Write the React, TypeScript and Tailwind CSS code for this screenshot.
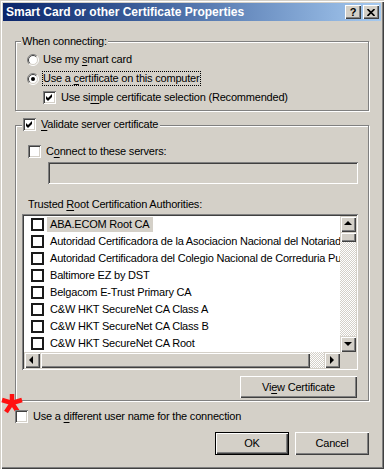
import type { ReactNode } from "react";

const raised =
  "bg-[#d4d0c8] shadow-[inset_1px_1px_0_#fff,inset_-1px_-1px_0_#404040,inset_-2px_-2px_0_#808080]";
const raisedSoft =
  "bg-[#d4d0c8] shadow-[inset_1px_1px_0_#d4d0c8,inset_2px_2px_0_#fff,inset_-1px_-1px_0_#404040,inset_-2px_-2px_0_#808080]";
const sunken =
  "shadow-[inset_1px_1px_0_#808080,inset_-1px_-1px_0_#fff,inset_2px_2px_0_#404040,inset_-2px_-2px_0_#d4d0c8]";
const etched = "border border-[#808080] shadow-[inset_1px_1px_0_#fff,1px_1px_0_#fff]";
const dither =
  "bg-[conic-gradient(#d4d0c8_25%,#fff_0_50%,#d4d0c8_0_75%,#fff_0)] bg-[length:2px_2px]";

const certs = [
  "ABA.ECOM Root CA",
  "Autoridad Certificadora de la Asociacion Nacional del Notariado Mexicano",
  "Autoridad Certificadora del Colegio Nacional de Correduria Publica Mexicana",
  "Baltimore EZ by DST",
  "Belgacom E-Trust Primary CA",
  "C&W HKT SecureNet CA Class A",
  "C&W HKT SecureNet CA Class B",
  "C&W HKT SecureNet CA Root",
];

const Check = ({ checked = false }: { checked?: boolean }) => (
  <span className={`relative block w-[13px] h-[13px] shrink-0 bg-white ${sunken}`}>
    {checked && (
      <svg width="13" height="13" viewBox="0 0 13 13" className="absolute left-0 top-0">
        <polygon points="3,5 5,7 9,3 9,6 5,10 3,8" fill="#000" />
      </svg>
    )}
  </span>
);

const Radio = ({ checked = false }: { checked?: boolean }) => (
  <svg width="12" height="12" viewBox="0 0 12 12" className="shrink-0">
    <circle cx="6" cy="6" r="5" fill="#fff" />
    <path d="M2.1 9.9 A5.5 5.5 0 0 1 9.9 2.1" stroke="#808080" fill="none" />
    <path d="M9.9 2.1 A5.5 5.5 0 0 1 2.1 9.9" stroke="#fff" fill="none" />
    <path d="M2.8 9.2 A4.5 4.5 0 0 1 9.2 2.8" stroke="#404040" fill="none" />
    <path d="M9.2 2.8 A4.5 4.5 0 0 1 2.8 9.2" stroke="#d4d0c8" fill="none" />
    {checked && <circle cx="6" cy="6" r="2" fill="#000" />}
  </svg>
);

const Arrow = ({ dir }: { dir: "up" | "down" | "left" | "right" }) => {
  const pts = {
    up: "4,9 12,9 8,5",
    down: "4,6 12,6 8,10",
    left: "9,4 9,12 5,8",
    right: "6,4 6,12 10,8",
  }[dir];
  return (
    <span className={`block w-[16px] h-[16px] shrink-0 ${raisedSoft}`}>
      <svg width="16" height="16" viewBox="0 0 16 16">
        <polygon points={pts} fill="#000" />
      </svg>
    </span>
  );
};

const U = ({ children }: { children: ReactNode }) => <span className="underline underline-offset-[2px]">{children}</span>;

const Button = ({ children, className = "" }: { children: ReactNode; className?: string }) => (
  <div className={`flex items-center justify-center ${raised} ${className}`}>{children}</div>
);

export default function App() {
  return (
    <div className="w-[384px] h-[469px] bg-[#d4d0c8] p-[3px] flex flex-col text-[11px] leading-[13px] tracking-[-0.2px] text-black font-['Liberation_Sans',Arial,sans-serif] shadow-[inset_1px_1px_0_#d4d0c8,inset_2px_2px_0_#fff,inset_-1px_-1px_0_#404040,inset_-2px_-2px_0_#808080]">
      {/* title bar */}
      <div className="h-[18px] flex items-center bg-linear-to-r from-[#0a246a] to-[#a6caf0] pl-[3px] pr-[2px]">
        <span className="text-white font-bold text-[12px] tracking-normal">
          Smart Card or other Certificate Properties
        </span>
        <div className="ml-auto flex gap-[2px]">
          <div className={`w-[16px] h-[14px] flex items-center justify-center font-bold text-[11px] tracking-normal ${raised}`}>
            ?
          </div>
          <div className={`w-[16px] h-[14px] flex items-center justify-center ${raised}`}>
            <svg width="8" height="7" viewBox="0 0 8 7">
              <path d="M0.5 0 L7.5 7 M7.5 0 L0.5 7" stroke="#000" strokeWidth="1.6" />
            </svg>
          </div>
        </div>
      </div>

      <div className="px-[12px] flex flex-col">
        {/* When connecting */}
        <div className={`mt-[20px] h-[70px] w-[354px] flex flex-col ${etched}`}>
          <div className="-mt-[7px] ml-[5px] px-[1px] w-fit bg-[#d4d0c8]">When connecting:</div>
          <div className="mt-[2px] h-[19px] flex items-center ml-[11px] gap-[4px]">
            <Radio />
            <span>
              Use my <U>s</U>mart card
            </span>
          </div>
          <div className="h-[19px] flex items-center ml-[11px] gap-[4px]">
            <Radio checked />
            <span className="border border-dotted border-black pr-[1px] -ml-[1px]">
              Use a <U>c</U>ertificate on this computer
            </span>
          </div>
          <div className="h-[19px] flex items-center ml-[27px] gap-[5px]">
            <Check checked />
            <span>
              Use si<U>m</U>ple certificate selection (Recommended)
            </span>
          </div>
        </div>

        {/* Validate server certificate */}
        <div className={`mt-[14px] h-[276px] w-[354px] flex flex-col ${etched}`}>
          <div className="-mt-[8px] ml-[6px] pl-[1px] pr-[2px] w-fit bg-[#d4d0c8] flex items-center gap-[5px]">
            <Check checked />
            <span>
              <U>V</U>alidate server certificate
            </span>
          </div>
          <div className="mt-[14px] ml-[12px] flex items-center gap-[5px]">
            <Check />
            <span>
              C<U>o</U>nnect to these servers:
            </span>
          </div>
          <div className={`mt-[4px] ml-[32px] w-[310px] h-[22px] bg-[#d4d0c8] ${sunken}`} />
          <div className="mt-[14px] ml-[12px]">
            Trusted <U>R</U>oot Certification Authorities:
          </div>

          {/* list */}
          <div className={`mt-[3px] ml-[6px] w-[336px] h-[156px] p-[2px] bg-white flex flex-col ${sunken}`}>
            <div className="flex h-[136px]">
              <div className="w-[316px] flex flex-col overflow-hidden">
                {certs.map((c, i) => (
                  <div key={c} className="h-[17px] flex items-center shrink-0 whitespace-nowrap">
                    <span className="ml-[7px] w-[13px] h-[13px] shrink-0 bg-white border-2 border-[#1a1a1a]" />
                    <span className={`ml-[3px] px-[3px] h-[15px] flex items-center ${i === 0 ? "bg-[#d4d0c8]" : ""}`}>
                      {c}
                    </span>
                  </div>
                ))}
              </div>
              <div className="w-[16px] flex flex-col">
                <Arrow dir="up" />
                <div className={`h-[10px] ${raisedSoft}`} />
                <div className={`flex-1 ${dither}`} />
                <Arrow dir="down" />
              </div>
            </div>
            <div className="flex h-[16px]">
              <Arrow dir="left" />
              <div className={`w-[270px] ${raisedSoft}`} />
              <div className={`w-[14px] ${dither}`} />
              <Arrow dir="right" />
              <div className="w-[16px] bg-[#d4d0c8]" />
            </div>
          </div>

          <Button className="mt-[6px] ml-[224px] w-[117px] h-[22px]">
            Vi<U>e</U>w Certificate
          </Button>
        </div>

        {/* different user name */}
        <div className="relative mt-[9px] flex items-center gap-[5px]">
          <svg
            width="24"
            height="20"
            viewBox="0 0 24 20"
            className="absolute -left-[14px] -top-[16px]"
          >
            <path d="M11 0 V9 M11 9 L21 6 M11 9 L1 6 M11 9 L17 18 M11 9 L5 18" stroke="#ff1010" strokeWidth="4.5" />
          </svg>
          <Check />
          <span>
            Use a <U>d</U>ifferent user name for the connection
          </span>
        </div>

        {/* buttons */}
        <div className="mt-[9px] ml-[200px] flex gap-[6px]">
          <div className="w-[75px] h-[23px] border border-black flex">
            <Button className="flex-1">OK</Button>
          </div>
          <Button className="w-[75px] h-[23px]">Cancel</Button>
        </div>
      </div>
    </div>
  );
}
